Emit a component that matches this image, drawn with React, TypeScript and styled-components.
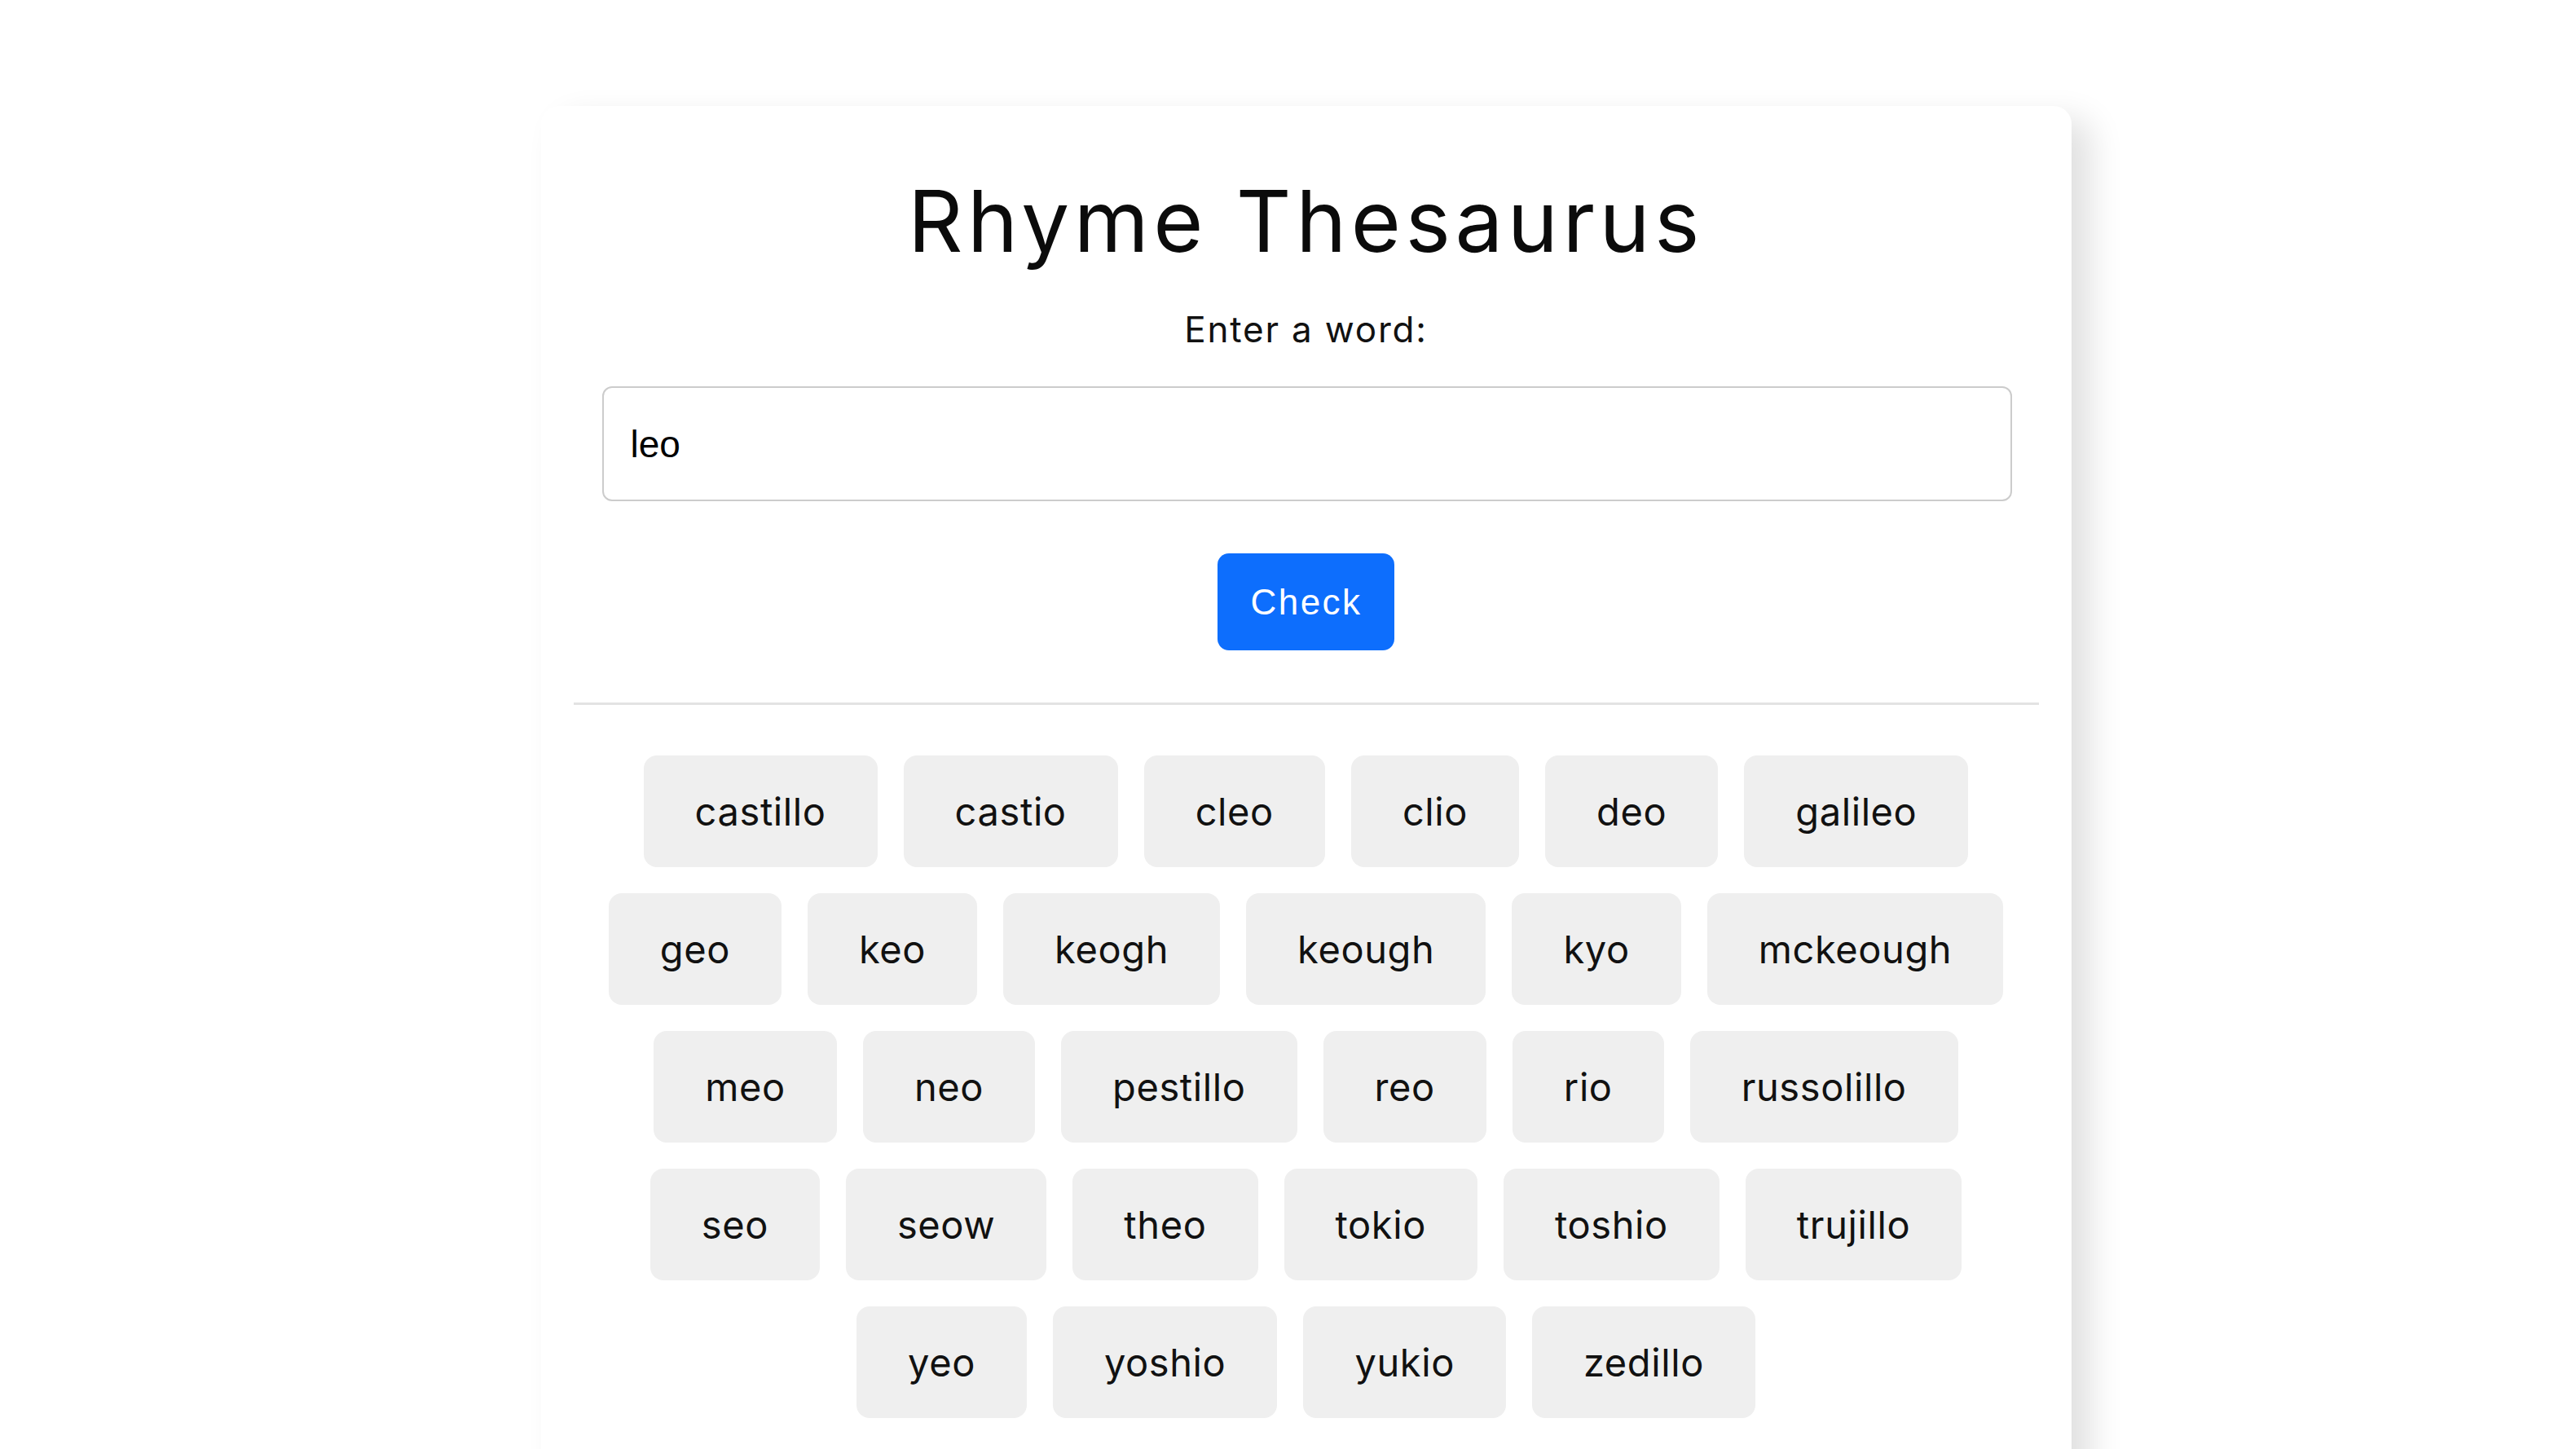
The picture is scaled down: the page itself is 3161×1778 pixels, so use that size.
import React, { useState } from "react";
import styled, { createGlobalStyle } from "styled-components";

const Global = createGlobalStyle`
  html, body {
    margin: 0;
    padding: 0;
    background: #ffffff;
  }
  body {
    font-family: "Inter", "Liberation Sans", sans-serif;
    color: #111111;
  }
`;

const Page = styled.div`
  display: flex;
  justify-content: center;
  padding: 130px 0 0 44px;
  min-height: 1778px;
  box-sizing: border-box;
  overflow: hidden;
`;

const Card = styled.main`
  width: 1878px;
  box-sizing: border-box;
  background: #ffffff;
  border-radius: 22px;
  box-shadow: 24px 16px 40px rgba(0, 0, 0, 0.12);
  padding: 77px 40px 80px;
  display: flex;
  flex-direction: column;
  align-items: center;
`;

const Title = styled.h1`
  margin: 0;
  font-family: "Inter", sans-serif;
  font-weight: 400;
  font-size: 105px;
  line-height: 127px;
  letter-spacing: 5.5px;
  color: #0b0b0b;
`;

const Label = styled.label`
  margin-top: 44px;
  font-family: "Inter", sans-serif;
  font-size: 44px;
  line-height: 53px;
  letter-spacing: 1.8px;
  color: #111111;
`;

const WordInput = styled.input`
  margin-top: 43px;
  align-self: stretch;
  margin-left: 35px;
  margin-right: 33px;
  height: 141px;
  box-sizing: border-box;
  border: 2px solid #cccccc;
  border-radius: 12px;
  padding: 0 33px;
  font-family: "Liberation Sans", Arial, sans-serif;
  font-size: 46px;
  color: #000000;
  background: #ffffff;
  outline: none;
`;

const CheckButton = styled.button`
  margin-top: 64px;
  border: none;
  border-radius: 14px;
  background: #0d6efd;
  color: #ffffff;
  font-family: "Liberation Sans", Arial, sans-serif;
  font-size: 44px;
  letter-spacing: 2.5px;
  line-height: 55px;
  padding: 32px 39px 32px 40px;
  cursor: pointer;
`;

const Divider = styled.hr`
  align-self: stretch;
  margin: 64px 0 0;
  border: none;
  height: 3px;
  background: #e3e3e3;
`;

const ChipList = styled.ul`
  list-style: none;
  margin: 62px 0 0;
  padding: 0 15px;
  align-self: stretch;
  display: flex;
  flex-wrap: wrap;
  justify-content: center;
  gap: 32px;
`;

const Chip = styled.li`
  background: #efefef;
  border-radius: 16px;
  padding: 40px 63px;
  font-family: "Inter", sans-serif;
  font-size: 47px;
  line-height: 57px;
  letter-spacing: 0.6px;
  color: #111111;
`;

const WORDS = [
  "castillo", "castio", "cleo", "clio", "deo", "galileo",
  "geo", "keo", "keogh", "keough", "kyo", "mckeough",
  "meo", "neo", "pestillo", "reo", "rio", "russolillo",
  "seo", "seow", "theo", "tokio", "toshio", "trujillo",
  "yeo", "yoshio", "yukio", "zedillo",
];

export default function App() {
  const [word, setWord] = useState("leo");
  return (
    <>
      <Global />
      <Page>
        <Card>
          <Title>Rhyme Thesaurus</Title>
          <Label htmlFor="word">Enter a word:</Label>
          <WordInput id="word" value={word} onChange={(e) => setWord(e.target.value)} />
          <CheckButton type="button">Check</CheckButton>
          <Divider />
          <ChipList>
            {WORDS.map((w) => (
              <Chip key={w}>{w}</Chip>
            ))}
          </ChipList>
        </Card>
      </Page>
    </>
  );
}
